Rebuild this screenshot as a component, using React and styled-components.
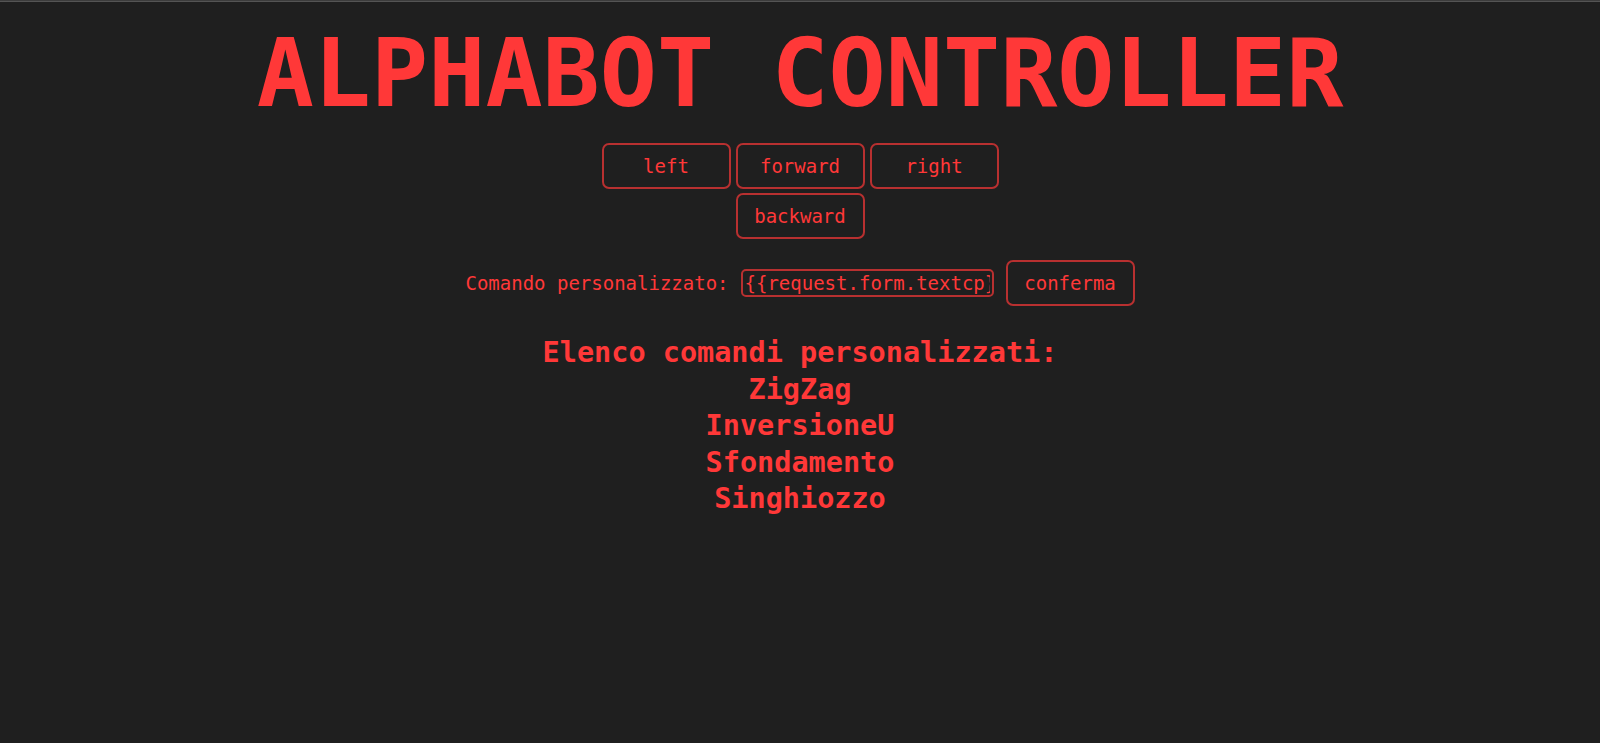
import React from "react";
import styled, { createGlobalStyle } from "styled-components";

const RED = "#ff3838";
const BORDER = "#b83030";
const MONO = '"DejaVu Sans Mono", "Liberation Mono", monospace';

const GlobalStyle = createGlobalStyle`
  html, body {
    margin: 0;
    padding: 0;
    background: #1f1f1f;
  }
  body {
    min-height: 100vh;
    font-family: ${MONO};
    color: ${RED};
  }
`;

const TopEdge = styled.div`
  height: 0;
  border-top: 1px solid #3c3c3c;
  border-bottom: 1px solid #545454;
`;

const Page = styled.main`
  display: flex;
  flex-direction: column;
  align-items: center;
`;

const Title = styled.h1`
  margin: 24px 0 0;
  font-family: ${MONO};
  font-weight: 700;
  font-size: 95px;
  line-height: 95px;
  color: ${RED};
  white-space: pre;
`;

const Pad = styled.div`
  margin-top: 21.5px;
  display: grid;
  grid-template-columns: repeat(3, 129px);
  column-gap: 5px;
  row-gap: 4.5px;
`;

const Button = styled.button`
  grid-column: ${(p) => p.$col || "auto"};
  box-sizing: border-box;
  width: 129px;
  height: 46px;
  padding: 0;
  display: flex;
  align-items: center;
  justify-content: center;
  background: transparent;
  border: 2px solid ${BORDER};
  border-radius: 7px;
  font-family: ${MONO};
  font-size: 19px;
  line-height: normal;
  color: ${RED};
  cursor: pointer;
`;

const CommandRow = styled.form`
  margin-top: 21px;
  display: flex;
  align-items: center;
  gap: 12px;
`;

const Label = styled.label`
  font-family: ${MONO};
  font-size: 19px;
  line-height: normal;
  color: ${RED};
  white-space: pre;
`;

const Input = styled.input`
  box-sizing: border-box;
  width: 253px;
  height: 28px;
  padding: 1px 2px;
  background: transparent;
  border: 2px solid ${BORDER};
  border-radius: 5px;
  font-family: ${MONO};
  font-size: 19px;
  color: ${RED};
  outline: none;
`;

const ListBlock = styled.section`
  margin-top: 29px;
  display: flex;
  flex-direction: column;
  align-items: center;
`;

const ListTitle = styled.h3`
  margin: 0;
  font-family: ${MONO};
  font-weight: 700;
  font-size: 28.5px;
  line-height: 36.5px;
  color: ${RED};
`;

const ListItem = styled.div`
  font-family: ${MONO};
  font-weight: 700;
  font-size: 28.5px;
  line-height: 36.5px;
  color: ${RED};
`;

const commands = ["ZigZag", "InversioneU", "Sfondamento", "Singhiozzo"];

export default function App() {
  return (
    <>
      <GlobalStyle />
      <TopEdge />
      <Page>
        <Title>ALPHABOT CONTROLLER</Title>
        <Pad>
          <Button type="button">left</Button>
          <Button type="button">forward</Button>
          <Button type="button">right</Button>
          <Button type="button" $col="2">backward</Button>
        </Pad>
        <CommandRow onSubmit={(e) => e.preventDefault()}>
          <Label htmlFor="textcp">Comando personalizzato:</Label>
          <Input id="textcp" type="text" defaultValue="{{request.form.textcp}}" />
          <Button type="submit">conferma</Button>
        </CommandRow>
        <ListBlock>
          <ListTitle>Elenco comandi personalizzati:</ListTitle>
          {commands.map((c) => (
            <ListItem key={c}>{c}</ListItem>
          ))}
        </ListBlock>
      </Page>
    </>
  );
}
